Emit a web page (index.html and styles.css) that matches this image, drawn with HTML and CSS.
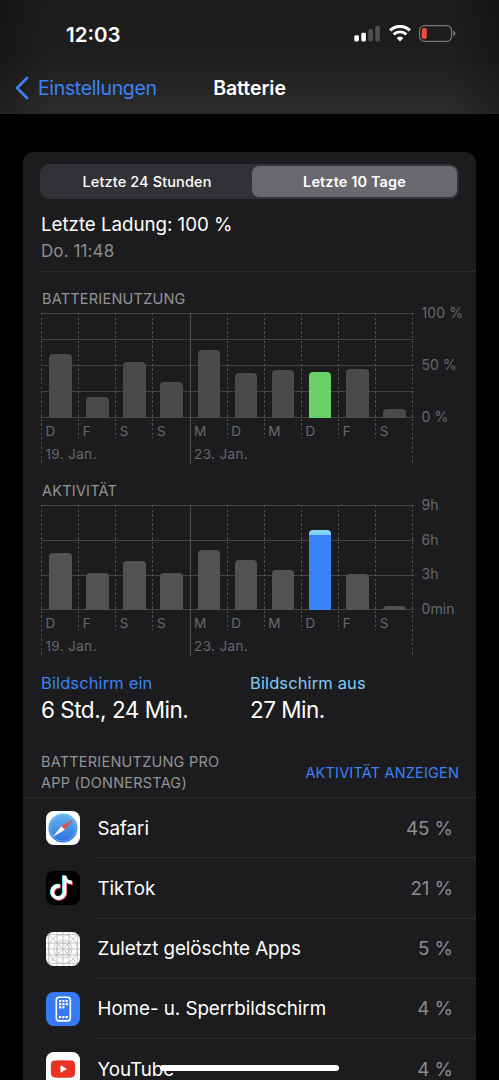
FILE: index.html
```
<!DOCTYPE html>
<html lang="de">
<head>
  <meta charset="UTF-8" />
  <meta name="viewport" content="width=device-width, initial-scale=1.0"/>
  <title>Batterie</title>
  <link rel="stylesheet" href="styles.css">
</head>
<body>

  <header>
    <div class="status-bar">
      <span class="time">12:03</span>
      <div class="status-icons">
        <svg class="signal" width="27" height="17" viewBox="0 0 27 17">
          <rect x="0.3" y="10.3" width="4.6" height="6.2" rx="1.4" fill="#fff"/>
          <rect x="7.3" y="7.7" width="4.6" height="8.8" rx="1.4" fill="#fff"/>
          <rect x="14.3" y="4.3" width="4.6" height="12.2" rx="1.4" fill="#505050"/>
          <rect x="21.3" y="0.7" width="4.6" height="15.8" rx="1.4" fill="#505050"/>
        </svg>
        <svg class="wifi" width="22" height="17" viewBox="0 0 22 17">
          <path d="M1.1 5.4A14.3 14.3 0 0 1 20.9 5.4" fill="none" stroke="#fff" stroke-width="3.2"/>
          <path d="M4.7 9.4A9 9 0 0 1 17.3 9.4" fill="none" stroke="#fff" stroke-width="2.9"/>
          <path d="M11 16.6L7.6 13A5 5 0 0 1 14.4 13Z" fill="#fff"/>
        </svg>
        <svg class="battery" width="37" height="17" viewBox="0 0 37 17">
          <rect x="0.6" y="0.7" width="32" height="15.6" rx="4.8" fill="none" stroke="#77777a" stroke-width="1.2"/>
          <path d="M34.3 5.8Q36.6 6.6 36.6 8.5T34.3 11.2Z" fill="#77777a"/>
          <rect x="2.8" y="3" width="5" height="11" rx="2" fill="#eb4e3d"/>
        </svg>
      </div>
    </div>
    <nav>
      <a class="back" href="#">
        <svg width="14" height="24" viewBox="0 0 14 24"><path d="M12 2L2 12L12 22" fill="none" stroke="#3b82f7" stroke-width="2.7" stroke-linecap="round" stroke-linejoin="round"/></svg>
        <span>Einstellungen</span>
      </a>
      <h1>Batterie</h1>
    </nav>
  </header>

  <main class="card">
    <div class="tabs">
      <button>Letzte 24 Stunden</button>
      <button class="active">Letzte 10 Tage</button>
    </div>

    <div class="charge">
      <p class="charge-title">Letzte Ladung: 100 %</p>
      <p class="charge-time">Do. 11:48</p>
    </div>

    <section class="usage">
      <h2>BATTERIENUTZUNG</h2>
      <div class="chart">
        <div class="plot">
          <div class="day long"><div class="slot"><div class="bar" style="height: 64px"></div></div><span>D</span><span class="week">19. Jan.</span></div>
          <div class="day"><div class="slot"><div class="bar" style="height: 21px"></div></div><span>F</span></div>
          <div class="day"><div class="slot"><div class="bar" style="height: 56px"></div></div><span>S</span></div>
          <div class="day"><div class="slot"><div class="bar" style="height: 35.5px"></div></div><span>S</span></div>
          <div class="day solid"><div class="slot"><div class="bar" style="height: 68px"></div></div><span>M</span><span class="week">23. Jan.</span></div>
          <div class="day"><div class="slot"><div class="bar" style="height: 45px"></div></div><span>D</span></div>
          <div class="day"><div class="slot"><div class="bar" style="height: 48px"></div></div><span>M</span></div>
          <div class="day"><div class="slot"><div class="bar green" style="height: 46px"></div></div><span>D</span></div>
          <div class="day"><div class="slot"><div class="bar" style="height: 49px"></div></div><span>F</span></div>
          <div class="day"><div class="slot"><div class="bar" style="height: 9px"></div></div><span>S</span></div>
          <div class="day long end"></div>
        </div>
        <div class="axis">
          <span>100 %</span>
          <span>50 %</span>
          <span>0 %</span>
        </div>
      </div>
    </section>

    <section class="activity">
      <h2>AKTIVITÄT</h2>
      <div class="chart">
        <div class="plot">
          <div class="day long"><div class="slot"><div class="bar" style="height: 56.5px"></div></div><span>D</span><span class="week">19. Jan.</span></div>
          <div class="day"><div class="slot"><div class="bar" style="height: 37px"></div></div><span>F</span></div>
          <div class="day"><div class="slot"><div class="bar" style="height: 49px"></div></div><span>S</span></div>
          <div class="day"><div class="slot"><div class="bar" style="height: 36.5px"></div></div><span>S</span></div>
          <div class="day solid"><div class="slot"><div class="bar" style="height: 60px"></div></div><span>M</span><span class="week">23. Jan.</span></div>
          <div class="day"><div class="slot"><div class="bar" style="height: 50px"></div></div><span>D</span></div>
          <div class="day"><div class="slot"><div class="bar" style="height: 40px"></div></div><span>M</span></div>
          <div class="day"><div class="slot"><div class="bar blue" style="height: 80px"></div></div><span>D</span></div>
          <div class="day"><div class="slot"><div class="bar" style="height: 36px"></div></div><span>F</span></div>
          <div class="day"><div class="slot"><div class="bar" style="height: 4px"></div></div><span>S</span></div>
          <div class="day long end"></div>
        </div>
        <div class="axis">
          <span>9h</span>
          <span>6h</span>
          <span>3h</span>
          <span>0min</span>
        </div>
      </div>
    </section>

    <div class="screen-time">
      <div>
        <p class="label on">Bildschirm ein</p>
        <p class="value">6 Std., 24 Min.</p>
      </div>
      <div>
        <p class="label off">Bildschirm aus</p>
        <p class="value">27 Min.</p>
      </div>
    </div>

    <div class="list-head">
      <h2>BATTERIENUTZUNG PRO<br>APP (DONNERSTAG)</h2>
      <a href="#">AKTIVITÄT ANZEIGEN</a>
    </div>

    <ul class="apps">
      <li>
        <svg class="icon" viewBox="0 0 34 34">
          <defs>
            <linearGradient id="sky" x1="0" y1="0" x2="0" y2="1">
              <stop offset="0" stop-color="#5fb8ee"/>
              <stop offset="1" stop-color="#2f6fe0"/>
            </linearGradient>
          </defs>
          <rect width="34" height="34" rx="7.8" fill="#fff"/>
          <circle cx="17" cy="17" r="14.6" fill="url(#sky)"/>
          <circle cx="17" cy="17" r="13" fill="none" stroke="#b4daf7" stroke-width="1.2" stroke-dasharray="0.6 1.3"/>
          <path d="M27.2 8.3L15.2 15.2L18.8 18.8Z" fill="#eb5040"/>
          <path d="M7 25.8L15.2 15.2L18.8 18.8Z" fill="#fff"/>
        </svg>
        <div class="row"><span>Safari</span><span class="percent">45 %</span></div>
      </li>
      <li>
        <svg class="icon" viewBox="0 0 34 34">
          <rect width="34" height="34" rx="7.8" fill="#000"/>
          <g fill="none" stroke-width="3.4">
            <path d="M14 15.2A6.1 6.1 0 1 0 18.6 21V4.8C18.8 8.7 21.7 11.4 26 11.5" transform="translate(-.9 -.5)" stroke="#5ce5e5"/>
            <path d="M14 15.2A6.1 6.1 0 1 0 18.6 21V4.8C18.8 8.7 21.7 11.4 26 11.5" transform="translate(.9 .8)" stroke="#e94560"/>
            <path d="M14 15.2A6.1 6.1 0 1 0 18.6 21V4.8C18.8 8.7 21.7 11.4 26 11.5" stroke="#fff"/>
          </g>
        </svg>
        <div class="row"><span>TikTok</span><span class="percent">21 %</span></div>
      </li>
      <li>
        <svg class="icon" viewBox="0 0 34 34">
          <defs>
            <clipPath id="tile"><rect width="34" height="34" rx="7.8"/></clipPath>
          </defs>
          <rect width="34" height="34" rx="7.8" fill="#fbfbfb"/>
          <g fill="none" stroke="#a9a9a9" stroke-width="0.6" clip-path="url(#tile)">
            <path d="M2.5 0V34M11 0V34M17 0V34M23 0V34M31.5 0V34M0 2.5H34M0 11H34M0 17H34M0 23H34M0 31.5H34M2 2L32 32M32 2L2 32"/>
            <circle cx="17" cy="17" r="14.5"/>
            <circle cx="17" cy="17" r="9"/>
            <circle cx="17" cy="17" r="6.2"/>
          </g>
        </svg>
        <div class="row"><span>Zuletzt gelöschte Apps</span><span class="percent">5 %</span></div>
      </li>
      <li>
        <svg class="icon" viewBox="0 0 34 34">
          <rect width="34" height="34" rx="7.8" fill="#3579f5"/>
          <rect x="10.3" y="5.3" width="14" height="23.6" rx="2.8" fill="none" stroke="#fff" stroke-width="1.6"/>
          <path d="M13 9H22M13 12.2H22M13 15.4H19M13 25.2H22" fill="none" stroke="#fff" stroke-width="2.2" stroke-dasharray="2.2 1.1"/>
        </svg>
        <div class="row"><span>Home- u. Sperrbildschirm</span><span class="percent">4 %</span></div>
      </li>
      <li>
        <svg class="icon" viewBox="0 0 34 34">
          <rect width="34" height="34" rx="7.8" fill="#fff"/>
          <path d="M8.5 8.6Q17 7.9 25.5 8.6Q28.7 8.9 29 12Q29.5 17 29 22Q28.7 25 25.5 25.4Q17 26 8.5 25.4Q5.3 25 5 22Q4.5 17 5 12Q5.3 8.9 8.5 8.6Z" fill="#e93323"/>
          <path d="M14.5 13.3L21 17L14.5 20.7Z" fill="#fff"/>
        </svg>
        <div class="row"><span>YouTube</span><span class="percent">4 %</span></div>
      </li>
    </ul>
  </main>

  <div class="home-indicator"></div>

</body>
</html>
```
FILE: styles.css
```
* {
  box-sizing: border-box;
}

body {
  background-color: #000;
  color: #fff;
  font-family: Inter, "Liberation Sans", sans-serif;
  margin: 0;
  height: 1080px;
  overflow: hidden;
}

h1, h2, p, ul {
  margin: 0;
  padding: 0;
  font-weight: 400;
}

a {
  text-decoration: none;
  color: #3b82f7;
}

/* Header */
header {
  height: 114px;
  background: linear-gradient(90deg, rgba(0, 0, 0, 0.25), transparent 10%, transparent 90%, rgba(0, 0, 0, 0.25)), linear-gradient(#1b1b1b, #1e1e1e 50%, #2b2b2b);
  border-bottom: 1px solid #262626;
}

.status-bar {
  height: 64px;
  padding: 4px 43px 0 66px;
  display: flex;
  justify-content: space-between;
  align-items: center;
}

.time {
  font-size: 20.5px;
  font-weight: 600;
}

.status-icons {
  display: flex;
  align-items: center;
  gap: 8px;
  margin-top: -1px;
}

nav {
  height: 48px;
  padding: 0 15px;
  display: grid;
  grid-template-columns: 1fr auto 1fr;
  align-items: center;
}

.back {
  display: flex;
  align-items: center;
  gap: 9px;
  font-size: 19.5px;
  letter-spacing: -0.35px;
}

h1 {
  font-size: 19.5px;
  font-weight: 600;
  letter-spacing: -0.05px;
}

/* Card */
.card {
  margin: 38px 23px 0;
  height: 940px;
  background-color: #1c1c1e;
  border-radius: 11px 11px 0 0;
  overflow: hidden;
}

.tabs {
  display: flex;
  height: 35px;
  margin: 12px 17px 0;
  padding: 2px;
  border-radius: 9px;
  background-color: #313136;
}

.tabs button {
  width: 210px;
  border: none;
  border-radius: 7px;
  background: none;
  color: #fff;
  font-family: inherit;
  font-size: 14.5px;
  font-weight: 500;
  letter-spacing: 0.12px;
  padding: 0;
}

.tabs .active {
  width: 205px;
  background-color: #69686e;
  font-weight: 600;
}

.charge {
  height: 73px;
  margin-left: 18px;
  padding-top: 13px;
  border-bottom: 1px solid #2b2b2d;
}

.charge-title {
  font-size: 18.8px;
  line-height: 26px;
  letter-spacing: -0.05px;
}

.charge-time {
  font-size: 17px;
  line-height: 26px;
  color: #8b8b90;
  letter-spacing: 0.1px;
}

h2 {
  font-size: 14.5px;
  line-height: 21px;
  color: #939398;
  letter-spacing: 0.22px;
}

/* Charts */
.usage,
.activity {
  height: 192px;
  padding: 16px 0 0 18px;
}

.usage h2,
.activity h2 {
  padding-left: 1px;
  height: 25px;
}

.chart {
  display: flex;
}

.plot {
  display: grid;
  grid-template-columns: repeat(10, 37.15px) 1px;
  width: 372.5px;
  height: 151px;
  background: repeating-linear-gradient(#414143 0 1px, transparent 1px 26.1px) 0 0 / 100% 105.4px no-repeat;
}

.activity .plot {
  background-image: repeating-linear-gradient(#454547 0 1px, transparent 1px 34.8px);
}

.day {
  height: 125px;
  padding-left: 4px;
  background: repeating-linear-gradient(#515153 0 2.4px, transparent 2.4px 4.6px) 0 0 / 1px 100% no-repeat;
  font-size: 13.5px;
  line-height: 20px;
  color: #68686c;
}

.day.long {
  height: 150px;
}

.day.solid {
  height: 151px;
  background: linear-gradient(#515153, #515153) 0 0 / 1px 100% no-repeat;
}

.day.end {
  padding: 0;
}

.day span {
  display: block;
  padding: 3px 0 0 0.5px;
  white-space: nowrap;
}

.day .week {
  letter-spacing: 0.35px;
}

.slot {
  height: 104.5px;
  padding-left: 4px;
  display: flex;
  align-items: flex-end;
}

.bar {
  width: 22.5px;
  background-color: #4a4a4a;
  border-radius: 4px 4px 0 0;
}

.activity .bar {
  background-color: #525252;
}

.bar.green {
  background-color: #69d069;
}

.activity .bar.blue {
  background: linear-gradient(#83d0f8 5.5px, #3b82f7 5.5px);
}

.axis {
  display: flex;
  flex-direction: column;
  justify-content: space-between;
  height: 121px;
  margin: -9px 0 0 8px;
  font-size: 14px;
  line-height: 17px;
  letter-spacing: 0.1px;
  color: #68686c;
}

/* Screen time */
.screen-time {
  display: grid;
  grid-template-columns: 209px 1fr;
  height: 95px;
  padding: 15px 0 0 18px;
}

.label {
  font-size: 16.5px;
  line-height: 24px;
  letter-spacing: 0.12px;
}

.on {
  color: #3b82f7;
}

.off {
  color: #7fcdf5;
}

.value {
  font-size: 22.5px;
  line-height: 29px;
  letter-spacing: -0.5px;
}

/* App list */
.list-head {
  display: flex;
  justify-content: space-between;
  align-items: center;
  height: 47px;
  padding: 0 17px 4px 18px;
  border-bottom: 1px solid #2b2b2d;
}

.list-head a {
  font-size: 14.5px;
  letter-spacing: 0.18px;
}

.apps {
  list-style: none;
}

.apps li {
  display: flex;
  align-items: center;
  height: 60.25px;
  padding-left: 23px;
}

.icon {
  width: 34px;
  height: 34px;
  margin-right: 17px;
}

.row {
  flex: 1;
  height: 100%;
  display: flex;
  align-items: center;
  justify-content: space-between;
  padding: 1px 23px 0 0.5px;
  border-bottom: 1px solid #2b2b2d;
  font-size: 18.8px;
  letter-spacing: -0.05px;
}

.percent {
  color: #8b8b90;
}

.home-indicator {
  position: fixed;
  left: 160px;
  bottom: 9px;
  width: 179px;
  height: 6px;
  border-radius: 3px;
  background-color: #fff;
}
```
